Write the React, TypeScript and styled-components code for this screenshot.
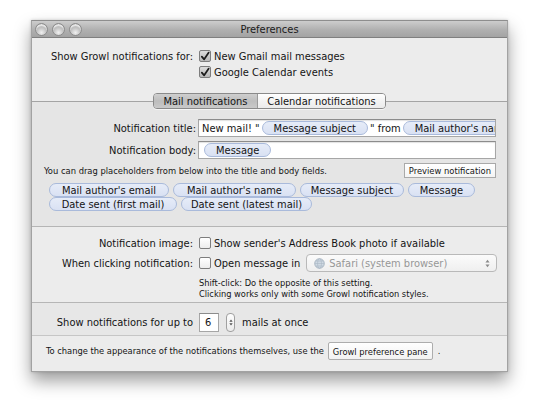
import React from 'react';
import styled, { createGlobalStyle } from 'styled-components';

const FONT = `"DejaVu Sans Condensed", "DejaVu Sans", sans-serif`;

const GlobalStyle = createGlobalStyle`
  html, body { margin: 0; padding: 0; background: #fff; }
  body { font-family: ${FONT}; font-size: 11px; color: #141414; }
`;

const Page = styled.div`
  width: 540px;
  height: 415px;
  padding: 20px 0 0 31px;
  box-sizing: border-box;
`;

const Window = styled.div`
  width: 477px;
  height: 352px;
  box-sizing: border-box;
  border: 1px solid #a2a2a2;
  border-top-color: #8e8e8e;
  background: #ececec;
  box-shadow: 0 9px 16px rgba(0, 0, 0, 0.38), 0 0 3px rgba(0, 0, 0, 0.18);
  display: flex;
  flex-direction: column;
  overflow: hidden;
`;

const TitleBar = styled.div`
  height: 16px;
  flex-shrink: 0;
  display: grid;
  grid-template-columns: 60px 1fr 60px;
  align-items: center;
  background: linear-gradient(#cdcdcd, #b0b0b0 55%, #a3a3a3);
  border-bottom: 1px solid #7f7f7f;
`;

const Lights = styled.div`
  display: flex;
  gap: 4px;
  padding-left: 3px;
  margin-top: 1px;
`;

const Light = styled.span`
  width: 13px;
  height: 13px;
  border-radius: 50%;
  box-sizing: border-box;
  border: 1px solid #8c8c8c;
  background: radial-gradient(circle at 50% 78%, #f0f0f0 0%, #c4c4c4 45%, #9d9d9d 100%);
  box-shadow: inset 0 2px 1px rgba(255, 255, 255, 0.7);
`;

const Title = styled.div`
  text-align: center;
  font-size: 11px;
  color: #1a1a1a;
`;

const TopSection = styled.div`
  height: 63px;
  flex-shrink: 0;
  box-sizing: border-box;
  padding-top: 10px;
`;

const FormGrid = styled.div<{ $label: number; $gap: number }>`
  display: grid;
  grid-template-columns: ${p => p.$label}px 1fr;
  column-gap: ${p => p.$gap}px;
  align-items: center;
`;

const Label = styled.div`
  text-align: right;
  white-space: nowrap;
`;

const CheckRow = styled.label`
  display: flex;
  align-items: center;
  gap: 3px;
  height: 16px;
  white-space: nowrap;
`;

const Box = styled.span<{ $on?: boolean }>`
  width: 12px;
  height: 12px;
  box-sizing: border-box;
  border: 1px solid #7d7d7d;
  border-radius: 2px;
  background: ${p => (p.$on ? 'linear-gradient(#dcdcdc, #b9b9b9)' : 'linear-gradient(#ffffff, #ececec)')};
  display: flex;
  align-items: center;
  justify-content: center;
  flex-shrink: 0;
`;

const TabBody = styled.div`
  height: 126px;
  flex-shrink: 0;
  box-sizing: border-box;
  border-top: 1px solid #a4a4a4;
  border-bottom: 1px solid #b5b5b5;
  background: #e5e5e5;
  display: flex;
  flex-direction: column;
`;

const Segmented = styled.div`
  align-self: center;
  margin-top: -9px;
  height: 16px;
  display: flex;
  box-sizing: border-box;
  border: 1px solid #8a8a8a;
  border-radius: 4px;
  overflow: hidden;
  box-shadow: 0 1px 0 rgba(255, 255, 255, 0.6);
`;

const Segment = styled.div<{ $active?: boolean; $width: number }>`
  width: ${p => p.$width}px;
  display: flex;
  align-items: center;
  justify-content: center;
  white-space: nowrap;
  background: ${p => (p.$active ? 'linear-gradient(#cfcfcf, #bdbdbd 50%, #c9c9c9)' : 'linear-gradient(#ffffff, #f3f3f3 50%, #ebebeb)')};
  & + & { border-left: 1px solid #9a9a9a; }
`;

const FieldGrid = styled(FormGrid)`
  margin-top: 10px;
  padding-right: 11px;
  row-gap: 4px;
`;

const TextField = styled.div`
  height: 18px;
  box-sizing: border-box;
  border: 1px solid #a6a6a6;
  border-top-color: #8c8c8c;
  background: #fff;
  box-shadow: inset 0 1px 1px rgba(0, 0, 0, 0.12);
  display: flex;
  align-items: center;
  padding: 0 3px;
  overflow: hidden;
  white-space: nowrap;
`;

const Token = styled.span<{ $width?: number }>`
  display: inline-flex;
  align-items: center;
  justify-content: center;
  flex-shrink: 0;
  ${p => (p.$width ? `width: ${p.$width}px;` : '')}
  height: 14px;
  box-sizing: border-box;
  padding: 0 11px;
  margin: 0 2px;
  border: 1px solid #a9badb;
  border-radius: 8px;
  background: linear-gradient(#e6ecf8, #d9e1f3);
  white-space: nowrap;
`;

const HintRow = styled.div`
  margin-top: 4px;
  height: 15px;
  display: flex;
  align-items: center;
  justify-content: space-between;
  padding: 0 11px 0 12px;
  font-size: 9.3px;
`;

const SmallButton = styled.span`
  height: 15px;
  box-sizing: border-box;
  border: 1px solid #a9a9a9;
  background: linear-gradient(#ffffff, #f4f4f4);
  display: inline-flex;
  align-items: center;
  padding: 0 4px;
  font-size: 9.3px;
  white-space: nowrap;
`;

const Palette = styled.div`
  margin-top: 5px;
  padding-left: 15px;
  display: flex;
  flex-direction: column;
`;

const PaletteRow = styled.div`
  display: flex;
`;

const Section = styled.div`
  height: 75px;
  flex-shrink: 0;
  box-sizing: border-box;
  padding-top: 8px;
`;

const SectionGrid = styled(FormGrid)`
  row-gap: 3px;
`;

const ControlRow = styled.div`
  display: flex;
  align-items: center;
  white-space: nowrap;
`;

const Popup = styled.div`
  margin-left: 6px;
  width: 191px;
  height: 18px;
  box-sizing: border-box;
  border: 1px solid #b9b9b9;
  border-radius: 4px;
  background: linear-gradient(#fbfbfb, #efefef);
  display: flex;
  align-items: center;
  padding: 0 6px 0 7px;
  gap: 4px;
  color: #979797;
`;

const PopupText = styled.span`
  flex: 1;
`;

const Note = styled.div`
  grid-column: 2;
  margin-top: 2px;
  font-size: 9.2px;
  line-height: 11px;
  white-space: nowrap;
`;

const Band = styled.div`
  height: 34px;
  flex-shrink: 0;
  box-sizing: border-box;
  border-top: 1px solid #b6b6b6;
  border-bottom: 1px solid #c6c6c6;
  background: #e7e7e7;
  padding-top: 10px;
`;

const NumberField = styled.div`
  width: 20px;
  height: 19px;
  box-sizing: border-box;
  border: 1px solid #a6a6a6;
  border-top-color: #8c8c8c;
  background: #fff;
  display: flex;
  align-items: center;
  padding-left: 5px;
`;

const Stepper = styled.div`
  margin: 0 7px;
  width: 9px;
  height: 19px;
  box-sizing: border-box;
  border: 1px solid #a0a0a0;
  border-radius: 4px;
  background: linear-gradient(#fdfdfd, #ececec);
  display: flex;
  flex-direction: column;
  align-items: center;
  justify-content: space-evenly;
`;

const Footer = styled.div`
  flex: 1;
  display: flex;
  align-items: flex-start;
  padding: 6px 0 0 14px;
  font-size: 9.25px;
  white-space: nowrap;
`;

const FooterText = styled.span`
  line-height: 18px;
`;

const PaneButton = styled.span`
  margin: 0 5px 0 4px;
  height: 18px;
  box-sizing: border-box;
  border: 1px solid #adadad;
  border-radius: 2px;
  background: linear-gradient(#ffffff, #f2f2f2);
  display: inline-flex;
  align-items: center;
  padding: 0 4px;
`;

const Check = ({ on }: { on?: boolean }) => (
  <Box $on={on}>
    {on && (
      <svg width="11" height="11" viewBox="0 0 11 11">
        <path d="M2 5.6 L4.6 8.6 L9.6 1.2" fill="none" stroke="#1c1c1c" strokeWidth="1.9" strokeLinecap="round" strokeLinejoin="round" />
      </svg>
    )}
  </Box>
);

const Globe = () => (
  <svg width="11" height="11" viewBox="0 0 11 11">
    <circle cx="5.5" cy="5.5" r="4.8" fill="#cfd9e3" stroke="#9aa9b8" strokeWidth="0.8" />
    <ellipse cx="5.5" cy="5.5" rx="2" ry="4.8" fill="none" stroke="#a9b7c4" strokeWidth="0.6" />
    <path d="M0.9 5.5 H10.1 M1.8 3 H9.2 M1.8 8 H9.2" stroke="#a9b7c4" strokeWidth="0.6" />
  </svg>
);

const UpDown = ({ color, w, h }: { color: string; w: number; h: number }) => (
  <svg width={w} height={h} viewBox="0 0 6 10">
    <path d="M3 0.5 L5.5 3.8 H0.5 Z" fill={color} />
    <path d="M3 9.5 L5.5 6.2 H0.5 Z" fill={color} />
  </svg>
);

// placeholder tokens, with the widths they have in the token field
const paletteRows: [string, number][][] = [
  [["Mail author's email", 120], ["Mail author's name", 123], ['Message subject', 104], ['Message', 67]],
  [['Date sent (first mail)', 128], ['Date sent (latest mail)', 131]],
];

export default function App() {
  return (
    <Page>
      <GlobalStyle />
      <Window>
        <TitleBar>
          <Lights>
            <Light />
            <Light />
            <Light />
          </Lights>
          <Title>Preferences</Title>
          <span />
        </TitleBar>

        <TopSection>
          <FormGrid $label={161} $gap={6}>
            <Label>Show Growl notifications for:</Label>
            <CheckRow>
              <Check on />
              New Gmail mail messages
            </CheckRow>
            <span />
            <CheckRow>
              <Check on />
              Google Calendar events
            </CheckRow>
          </FormGrid>
        </TopSection>

        <TabBody>
          <Segmented>
            <Segment $active $width={103}>Mail notifications</Segment>
            <Segment $width={127}>Calendar notifications</Segment>
          </Segmented>

          <FieldGrid $label={164} $gap={2}>
            <Label>Notification title:</Label>
            <TextField>
              New mail! "<Token>Message subject</Token>" from<Token>Mail author's name</Token>
            </TextField>
            <Label>Notification body:</Label>
            <TextField>
              <Token>Message</Token>
            </TextField>
          </FieldGrid>

          <HintRow>
            <span>You can drag placeholders from below into the title and body fields.</span>
            <SmallButton>Preview notification</SmallButton>
          </HintRow>

          <Palette>
            {paletteRows.map((row, i) => (
              <PaletteRow key={i}>
                {row.map(([t, w]) => (
                  <Token key={t} $width={w}>{t}</Token>
                ))}
              </PaletteRow>
            ))}
          </Palette>
        </TabBody>

        <Section>
          <SectionGrid $label={161} $gap={6}>
            <Label>Notification image:</Label>
            <CheckRow>
              <Check />
              Show sender's Address Book photo if available
            </CheckRow>
            <Label>When clicking notification:</Label>
            <ControlRow>
              <CheckRow>
                <Check />
                Open message in
              </CheckRow>
              <Popup>
                <Globe />
                <PopupText>Safari (system browser)</PopupText>
                <UpDown color="#8a8a8a" w={5} h={9} />
              </Popup>
            </ControlRow>
            <Note>
              Shift-click: Do the opposite of this setting.
              <br />
              Clicking works only with some Growl notification styles.
            </Note>
          </SectionGrid>
        </Section>

        <Band>
          <FormGrid $label={161} $gap={6}>
            <Label>Show notifications for up to</Label>
            <ControlRow>
              <NumberField>6</NumberField>
              <Stepper>
                <UpDown color="#555" w={4} h={15} />
              </Stepper>
              mails at once
            </ControlRow>
          </FormGrid>
        </Band>

        <Footer>
          <FooterText>To change the appearance of the notifications themselves, use the</FooterText>
          <PaneButton>Growl preference pane</PaneButton>
          <FooterText>.</FooterText>
        </Footer>
      </Window>
    </Page>
  );
}
